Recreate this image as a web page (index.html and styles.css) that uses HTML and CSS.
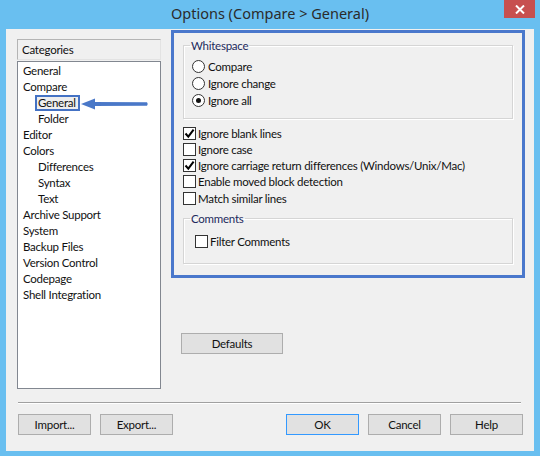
FILE: index.html
```html
<!DOCTYPE html>
<html>
<head>
<meta charset="utf-8">
<link rel="stylesheet" href="styles.css">
</head>
<body>
<div class="window">
  <div class="titlebar">
    <div class="tb-spacer"></div>
    <div class="title">Options (Compare &gt; General)</div>
    <div class="tb-right">
      <div class="close">
        <svg width="10" height="9" viewBox="0 0 10 9"><path d="M1 0.5 L9 8.5 M9 0.5 L1 8.5" stroke="#fff" stroke-width="2"/></svg>
      </div>
    </div>
  </div>
  <div class="client">
    <div class="main">
      <div class="left">
        <div class="cat-header">Categories</div>
        <div class="cat-list">
          <div class="item">General</div>
          <div class="item">Compare</div>
          <div class="item sub"><span class="sel">General</span></div>
          <div class="item sub">Folder</div>
          <div class="item">Editor</div>
          <div class="item">Colors</div>
          <div class="item sub">Differences</div>
          <div class="item sub">Syntax</div>
          <div class="item sub">Text</div>
          <div class="item">Archive Support</div>
          <div class="item">System</div>
          <div class="item">Backup Files</div>
          <div class="item">Version Control</div>
          <div class="item">Codepage</div>
          <div class="item">Shell Integration</div>
          <svg class="arrow" width="70" height="14" viewBox="0 0 70 14">
            <path d="M13 5 L66 5.2 Q67.5 7 66 8.8 L13 9 Z" fill="#4a78c8"/>
            <path d="M0 7 L14 1.5 L14 12.5 Z" fill="#4a78c8"/>
          </svg>
        </div>
      </div>
      <div class="right">
        <div class="highlight">
          <fieldset class="group ws">
            <legend>Whitespace</legend>
            <div class="opt radio-row"><span class="radio"></span><span>Compare</span></div>
            <div class="opt radio-row"><span class="radio"></span><span>Ignore change</span></div>
            <div class="opt radio-row"><span class="radio on"></span><span>Ignore all</span></div>
          </fieldset>
          <div class="checks">
            <div class="opt check-row"><span class="check"><svg width="11" height="11" viewBox="0 0 11 11"><path d="M1.5 5.5 L4.3 8.6 L9.6 1.6" stroke="#000" stroke-width="2" fill="none"/></svg></span><span>Ignore blank lines</span></div>
            <div class="opt check-row"><span class="check"></span><span>Ignore case</span></div>
            <div class="opt check-row"><span class="check"><svg width="11" height="11" viewBox="0 0 11 11"><path d="M1.5 5.5 L4.3 8.6 L9.6 1.6" stroke="#000" stroke-width="2" fill="none"/></svg></span><span>Ignore carriage return differences (Windows/Unix/Mac)</span></div>
            <div class="opt check-row"><span class="check"></span><span>Enable moved block detection</span></div>
            <div class="opt check-row last"><span class="check"></span><span>Match similar lines</span></div>
          </div>
          <fieldset class="group cm">
            <legend>Comments</legend>
            <div class="opt check-row"><span class="check"></span><span>Filter Comments</span></div>
          </fieldset>
        </div>
        <div class="defaults-row"><div class="btn defaults">Defaults</div></div>
      </div>
    </div>
    <div class="sep"></div>
    <div class="buttons">
      <div class="btn">Import...</div>
      <div class="btn">Export...</div>
      <div class="grow"></div>
      <div class="btn default">OK</div>
      <div class="btn">Cancel</div>
      <div class="btn">Help</div>
    </div>
  </div>
</div>
</body>
</html>
```
FILE: styles.css
```css
* { box-sizing: border-box; }
html, body { margin: 0; padding: 0; }
body {
  width: 540px;
  height: 456px;
  background: #69bff0;
  font-family: Lato, "Noto Sans", sans-serif;
  font-size: 11.5px;
  letter-spacing: -0.25px;
  color: #111;
  overflow: hidden;
}
.window {
  width: 540px;
  height: 456px;
  display: flex;
  flex-direction: column;
}
.titlebar {
  height: 29px;
  display: grid;
  grid-template-columns: 1fr auto 1fr;
}
.title {
  font-family: "Noto Sans", "Open Sans", sans-serif;
  font-size: 14.5px;
  letter-spacing: 0;
  color: #2b2b2b;
  line-height: 27px;
  white-space: nowrap;
}
.tb-right {
  display: flex;
  justify-content: flex-end;
  align-items: flex-start;
  padding-right: 5px;
}
.close {
  width: 31px;
  height: 18px;
  background: #c75050;
  display: flex;
  align-items: center;
  justify-content: center;
}
.close svg { display: block; }
.client {
  margin: 0 6px;
  height: 422px;
  background: #f0f0f0;
  display: flex;
  flex-direction: column;
}
.main {
  display: flex;
  padding: 1px 9px 0 11px;
  gap: 10px;
  height: 360px;
}
.left {
  width: 144px;
  padding-top: 9px;
  display: flex;
  flex-direction: column;
}
.cat-header {
  height: 21px;
  border: 1px solid;
  border-color: #b4b4b4 #e3e3e3 #e3e3e3 #b4b4b4;
  padding-left: 4px;
  line-height: 19px;
  margin-bottom: 1px;
}
.cat-list {
  position: relative;
  height: 328px;
  background: #fff;
  border: 1px solid #828790;
  padding-top: 1px;
}
.item {
  height: 16px;
  line-height: 16px;
  padding-left: 5px;
  white-space: nowrap;
}
.item.sub { padding-left: 20px; }
.sel {
  display: inline-block;
  margin-left: -3px;
  padding: 0 2px 0 1px;
  height: 16px;
  line-height: 12px;
  border: 2px solid #4472c4;
  background: #eeeeee;
}
.arrow {
  position: absolute;
  left: 63px;
  top: 35px;
}
.right {
  width: 354px;
  display: flex;
  flex-direction: column;
}
.highlight {
  height: 248px;
  border: 3px solid #4a78cc;
  padding: 5px 9px 0 9px;
}
.group {
  margin: 0;
  min-width: 0;
  border: 1px solid #d5d5d5;
  box-shadow: inset 1px 1px 0 #fff, 1px 1px 0 #fff;
}
.group legend {
  padding: 0 1px;
  line-height: 15px;
  color: #1c2a5c;
}
.ws { padding: 5px 8px 9px 8px; }
.ws legend { margin-left: -2px; }
.cm { padding: 7px 11px 14px 11px; margin-top: 4px; }
.cm legend { margin-left: -5px; }
.opt {
  display: flex;
  align-items: center;
  white-space: nowrap;
}
.radio-row { height: 17px; gap: 3px; }
.check-row { height: 16px; gap: 2px; }
.check-row.last { height: 17px; margin-top: 1px; }
.checks { padding-top: 6px; }
.radio {
  width: 13px;
  height: 13px;
  border-radius: 50%;
  border: 1px solid #333;
  background: #fff;
  display: flex;
  align-items: center;
  justify-content: center;
}
.radio.on::after {
  content: "";
  width: 5px;
  height: 5px;
  border-radius: 50%;
  background: #111;
}
.check {
  width: 13px;
  height: 13px;
  border: 1px solid #333;
  background: #fff;
  display: flex;
  align-items: center;
  justify-content: center;
}
.check svg { display: block; }
.btn {
  width: 73px;
  height: 21px;
  background: #e1e1e1;
  border: 1px solid #adadad;
  display: flex;
  align-items: center;
  justify-content: center;
  white-space: nowrap;
}
.btn.default { border-color: #3399ff; }
.defaults-row {
  padding: 55px 0 0 10px;
}
.btn.defaults { width: 102px; }
.sep {
  margin: 13px 13px 0 12px;
  height: 2px;
  border-top: 1px solid #a0a0a0;
  border-bottom: 1px solid #fff;
}
.buttons {
  display: flex;
  gap: 9px;
  padding: 10px 11px 0 12px;
}
.grow { flex: 1; }
```
